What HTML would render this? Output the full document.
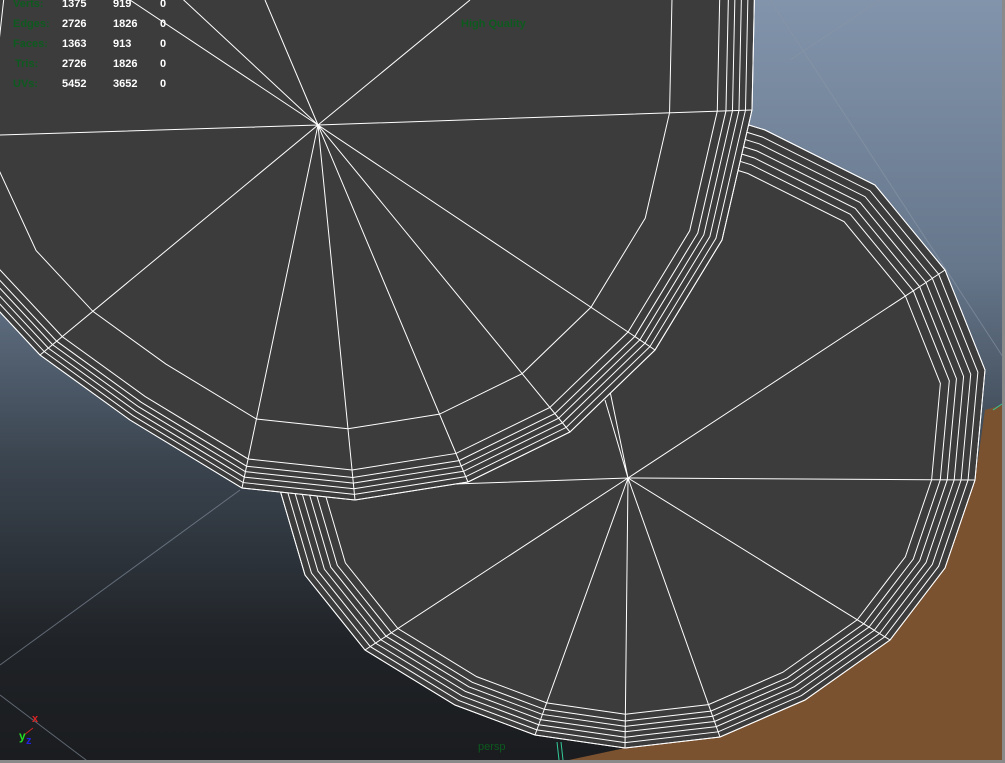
<!DOCTYPE html>
<html><head><meta charset="utf-8"><style>
html,body{margin:0;padding:0;width:1005px;height:763px;overflow:hidden;background:#1c1e21}
svg{position:absolute;left:0;top:0}
.t{position:absolute;font:bold 11px "Liberation Sans",sans-serif;color:#fff}
.g{color:#0d5a1e}
</style></head><body>
<svg width="1005" height="763" viewBox="0 0 1005 763">
<defs>
<linearGradient id="bg" x1="0" y1="0" x2="0" y2="1">
<stop offset="0" stop-color="#8294ab"/><stop offset="0.35" stop-color="#66778c"/>
<stop offset="0.6" stop-color="#3b4550"/><stop offset="0.85" stop-color="#1f2226"/><stop offset="1" stop-color="#1a1c1f"/>
</linearGradient>
<polygon id="p2" points="280,490 305,575 365,650 455,705 535,735 625,748 720,737 805,700 890,640 945,568 975,480 985,370 945,270 875,185 765,130 700,110 560,150 400,300"/>
<polygon id="p1" points="755,-30 752,110 722,240 655,350 570,432 468,482 355,500 242,488 130,420 40,355 -30,280 -90,150 -70,-30"/>
</defs>
<rect width="1005" height="763" fill="url(#bg)"/>
<g stroke="#8a96a6" stroke-width="1" opacity="0.6" fill="none">
<line x1="770" y1="0" x2="1005" y2="360"/><line x1="880" y1="0" x2="790" y2="60"/>
<line x1="240" y1="490" x2="0" y2="665"/><line x1="0" y1="695" x2="90" y2="763"/>
</g>
<polygon points="555,763 1002,763 1002,405 985,410 975,480 945,568 890,640 805,700 720,737 625,748" fill="#7a5230"/>
<g fill="none" stroke="#fff" stroke-width="1">
<use href="#p2" fill="#3c3c3c"/>
<g transform="translate(628,478) scale(0.875) translate(-628,-478)"><use href="#p2" stroke-width="1.14"/></g>
<g transform="translate(628,478) scale(0.9) translate(-628,-478)"><use href="#p2" stroke-width="1.11"/></g>
<g transform="translate(628,478) scale(0.92) translate(-628,-478)"><use href="#p2" stroke-width="1.09"/></g>
<g transform="translate(628,478) scale(0.94) translate(-628,-478)"><use href="#p2" stroke-width="1.06"/></g>
<g transform="translate(628,478) scale(0.96) translate(-628,-478)"><use href="#p2" stroke-width="1.04"/></g>
<g transform="translate(628,478) scale(0.98) translate(-628,-478)"><use href="#p2" stroke-width="1.02"/></g>
<use href="#p2"/>
<path d="M628,478L280,490M628,478L365,650M628,478L535,735M628,478L625,748M628,478L720,737M628,478L890,640M628,478L975,480M628,478L945,270M628,478L560,150M628,478L605,400"/>
</g>
<g fill="none" stroke="#fff" stroke-width="1">
<use href="#p1" fill="#3c3c3c"/>
<g transform="translate(318,125) scale(0.81) translate(-318,-125)"><use href="#p1" stroke-width="1.23"/></g>
<g transform="translate(318,125) scale(0.92) translate(-318,-125)"><use href="#p1" stroke-width="1.1"/></g>
<g transform="translate(318,125) scale(0.94) translate(-318,-125)"><use href="#p1" stroke-width="1.1"/></g>
<g transform="translate(318,125) scale(0.955) translate(-318,-125)"><use href="#p1" stroke-width="1.05"/></g>
<g transform="translate(318,125) scale(0.97) translate(-318,-125)"><use href="#p1" stroke-width="1.03"/></g>
<g transform="translate(318,125) scale(0.985) translate(-318,-125)"><use href="#p1"/></g>
<use href="#p1"/>
<path d="M318,125L752,110M318,125L655,350M318,125L570,432M318,125L468,482M318,125L355,500M318,125L242,488M318,125L40,355M318,125L0,135M318,125L130,0M318,125L265,0M318,125L470,0M318,125L130,-50"/>
</g>
<rect x="1002" y="0" width="3" height="763" fill="#8a8a8a"/>
<rect x="0" y="760" width="1005" height="3" fill="#8a8a8a"/>
<line x1="557" y1="742" x2="559" y2="760" stroke="#3c9" stroke-width="1"/>
<line x1="561" y1="742" x2="563" y2="760" stroke="#3c9" stroke-width="1"/>
<line x1="993" y1="410" x2="1002" y2="404" stroke="#3c9" stroke-width="1"/>
<line x1="24" y1="735" x2="33" y2="728" stroke="#c22" stroke-width="1"/>
<text x="32" y="722" font-family="Liberation Sans" font-size="11" font-weight="bold" fill="#d22">x</text>
<text x="19" y="740" font-family="Liberation Sans" font-size="12" font-weight="bold" fill="#2d2">y</text>
<text x="26" y="744" font-family="Liberation Sans" font-size="11" font-weight="bold" fill="#22d">z</text>
</svg>
<div class="t g" style="left:13px;top:-2px">Verts:</div>
<div class="t g" style="left:13px;top:18px">Edges:</div>
<div class="t g" style="left:13px;top:38px">Faces:</div>
<div class="t g" style="left:15px;top:58px">Tris:</div>
<div class="t g" style="left:13px;top:78px">UVs:</div>
<div class="t" style="left:62px;top:-2px">1375</div><div class="t" style="left:113px;top:-2px">919</div><div class="t" style="left:160px;top:-2px">0</div>
<div class="t" style="left:62px;top:18px">2726</div><div class="t" style="left:113px;top:18px">1826</div><div class="t" style="left:160px;top:18px">0</div>
<div class="t" style="left:62px;top:38px">1363</div><div class="t" style="left:113px;top:38px">913</div><div class="t" style="left:160px;top:38px">0</div>
<div class="t" style="left:62px;top:58px">2726</div><div class="t" style="left:113px;top:58px">1826</div><div class="t" style="left:160px;top:58px">0</div>
<div class="t" style="left:62px;top:78px">5452</div><div class="t" style="left:113px;top:78px">3652</div><div class="t" style="left:160px;top:78px">0</div>
<div class="t g" style="left:461px;top:18px">High Quality</div>
<div class="t g" style="left:478px;top:741px;font-weight:normal">persp</div>
</body></html>
